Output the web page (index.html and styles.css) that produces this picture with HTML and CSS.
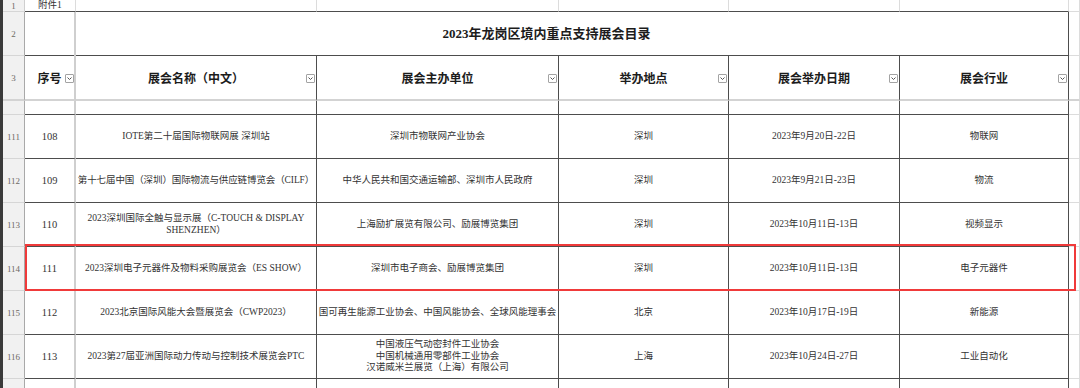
FILE: index.html
```html
<!DOCTYPE html>
<html lang="zh-CN">
<head>
<meta charset="utf-8">
<title>2023年龙岗区境内重点支持展会目录</title>
<link rel="stylesheet" href="styles.css">
</head>
<body>
<div class="sheet">
  <div class="row r1">
    <div class="rh">1</div>
    <div class="c top">附件1</div>
    <div class="c top"></div>
    <div class="c top"></div>
    <div class="c top"></div>
    <div class="c top"></div>
    <div class="c top"></div>
    <div class="c g"></div>
  </div>
  <div class="row r2">
    <div class="rh">2</div>
    <div class="c t title">2023年龙岗区境内重点支持展会目录</div>
    <div class="c g"></div>
  </div>
  <div class="row r3">
    <div class="rh">3</div>
    <div class="c t ca head">序号<span class="flt"><svg viewBox="0 0 9 9" width="9" height="9"><polyline points="2.5,3.5 4.5,5.5 6.5,3.5"/></svg></span></div>
    <div class="c t head">展会名称（中文）<span class="flt"><svg viewBox="0 0 9 9" width="9" height="9"><polyline points="2.5,3.5 4.5,5.5 6.5,3.5"/></svg></span></div>
    <div class="c t head">展会主办单位<span class="flt"><svg viewBox="0 0 9 9" width="9" height="9"><polyline points="2.5,3.5 4.5,5.5 6.5,3.5"/></svg></span></div>
    <div class="c t head">举办地点<span class="flt"><svg viewBox="0 0 9 9" width="9" height="9"><polyline points="2.5,3.5 4.5,5.5 6.5,3.5"/></svg></span></div>
    <div class="c t head">展会举办日期<span class="flt"><svg viewBox="0 0 9 9" width="9" height="9"><polyline points="2.5,3.5 4.5,5.5 6.5,3.5"/></svg></span></div>
    <div class="c t head">展会行业<span class="flt"><svg viewBox="0 0 9 9" width="9" height="9"><polyline points="2.5,3.5 4.5,5.5 6.5,3.5"/></svg></span></div>
    <div class="c g"></div>
  </div>
  <div class="row r110">
    <div class="rh"></div>
    <div class="c t ca"></div>
    <div class="c t"></div>
    <div class="c t"></div>
    <div class="c t"></div>
    <div class="c t"></div>
    <div class="c t"></div>
    <div class="c g"></div>
  </div>
  <div class="row data">
    <div class="rh">111</div>
    <div class="c t ca">108</div>
    <div class="c t">IOTE第二十届国际物联网展 深圳站</div>
    <div class="c t">深圳市物联网产业协会</div>
    <div class="c t">深圳</div>
    <div class="c t">2023年9月20日-22日</div>
    <div class="c t">物联网</div>
    <div class="c g"></div>
  </div>
  <div class="row data">
    <div class="rh">112</div>
    <div class="c t ca">109</div>
    <div class="c t tight">第十七届中国（深圳）国际物流与供应链博览会（CILF）</div>
    <div class="c t">中华人民共和国交通运输部、深圳市人民政府</div>
    <div class="c t">深圳</div>
    <div class="c t">2023年9月21日-23日</div>
    <div class="c t">物流</div>
    <div class="c g"></div>
  </div>
  <div class="row data">
    <div class="rh">113</div>
    <div class="c t ca">110</div>
    <div class="c t">2023深圳国际全触与显示展（C-TOUCH &amp; DISPLAY<br>SHENZHEN）</div>
    <div class="c t">上海励扩展览有限公司、励展博览集团</div>
    <div class="c t">深圳</div>
    <div class="c t">2023年10月11日-13日</div>
    <div class="c t">视频显示</div>
    <div class="c g"></div>
  </div>
  <div class="row data hl">
    <div class="rh">114</div>
    <div class="c t ca">111</div>
    <div class="c t">2023深圳电子元器件及物料采购展览会（ES SHOW）</div>
    <div class="c t">深圳市电子商会、励展博览集团</div>
    <div class="c t">深圳</div>
    <div class="c t">2023年10月11日-13日</div>
    <div class="c t">电子元器件</div>
    <div class="c g"></div>
  </div>
  <div class="row data">
    <div class="rh">115</div>
    <div class="c t ca">112</div>
    <div class="c t">2023北京国际风能大会暨展览会（CWP2023）</div>
    <div class="c t">国可再生能源工业协会、中国风能协会、全球风能理事会</div>
    <div class="c t">北京</div>
    <div class="c t">2023年10月17日-19日</div>
    <div class="c t">新能源</div>
    <div class="c g"></div>
  </div>
  <div class="row data">
    <div class="rh">116</div>
    <div class="c t ca">113</div>
    <div class="c t">2023第27届亚洲国际动力传动与控制技术展览会PTC</div>
    <div class="c t">中国液压气动密封件工业协会<br>中国机械通用零部件工业协会<br>汉诺威米兰展览（上海）有限公司</div>
    <div class="c t">上海</div>
    <div class="c t">2023年10月24日-27日</div>
    <div class="c t">工业自动化</div>
    <div class="c g"></div>
  </div>
  <div class="row data last">
    <div class="rh"></div>
    <div class="c t ca"></div>
    <div class="c t"></div>
    <div class="c t"></div>
    <div class="c t"></div>
    <div class="c t"></div>
    <div class="c t"></div>
    <div class="c g"></div>
  </div>
</div>
</body>
</html>
```

FILE: styles.css
```css
html, body {
  margin: 0;
  padding: 0;
  background: #ffffff;
}

body {
  width: 1080px;
  height: 388px;
  overflow: hidden;
  font-family: "Liberation Serif", "Noto Sans CJK SC", serif;
  color: #333333;
}

.sheet {
  border-left: 3px solid #3a3a3a;
  height: 388px;
  box-sizing: border-box;
}

.row {
  display: grid;
  grid-template-columns: 22px 51px 241px 242px 170px 171px 169px 1fr;
  height: 44px;
}

.r1 { height: 12px; }
.r2 { height: 44px; position: relative; }
.r3 { height: 45px; }
.r110 { height: 14px; }
.last { height: 20px; }

.c {
  box-sizing: border-box;
  display: flex;
  align-items: center;
  justify-content: center;
  text-align: center;
  overflow: hidden;
  white-space: nowrap;
  font-size: 9.5px;
  line-height: 11.5px;
  border-right: 1px solid #dcdcdc;
  border-bottom: 1px solid #dcdcdc;
}

.tight { letter-spacing: -0.1px; }

.rh {
  box-sizing: border-box;
  background: #f1f1f1;
  border-right: 1px solid #a9a9a9;
  border-bottom: 1px solid #d6d6d6;
  display: flex;
  align-items: center;
  justify-content: center;
  font-family: "Liberation Serif", serif;
  font-size: 9px;
  color: #6e6a64;
}

.r1 .rh { border-right-color: #cfcfcf; }

.top {
  border-bottom-color: #4d4d4d;
  align-items: flex-start;
  line-height: 11px;
}

.r1 .c:first-of-type { border-right: 2px solid #d2d2d2; }

.t {
  border-right-color: #4d4d4d;
  border-bottom-color: #4d4d4d;
}

.ca {
  border-right: 2px solid #cfcfcf;
}

.title {
  grid-column: span 6;
  font-size: 13px;
  font-weight: 700;
  color: #1c1c1c;
  padding-top: 1px;
}

.r2::before {
  content: "";
  position: absolute;
  left: 71px;
  top: 0;
  width: 2px;
  height: 100%;
  background: #cfcfcf;
}

.head {
  position: relative;
  font-size: 12px;
  font-weight: 700;
  color: #1c1c1c;
  font-family: "Noto Sans CJK SC", sans-serif;
}

.r3 .c, .r3 .rh {
  border-bottom: 2px solid #d3d3d3;
}

.flt {
  position: absolute;
  right: 1px;
  top: 18px;
  width: 9px;
  height: 9px;
  box-sizing: border-box;
  border: 1px solid #a3a3a3;
  border-radius: 1px;
  background: #ffffff;
  display: flex;
}

.flt svg {
  margin: -1px;
  fill: none;
  stroke: #555555;
  stroke-width: 1;
}

.ca.head .flt { right: 0; }

.data .c { color: #333333; }

.data .ca { font-size: 10.5px; }

.hl { position: relative; }

.hl::after {
  content: "";
  position: absolute;
  left: 22px;
  top: -3px;
  width: 1051px;
  height: 47px;
  box-sizing: border-box;
  border: 2px solid #f03a3a;
  pointer-events: none;
}
```
